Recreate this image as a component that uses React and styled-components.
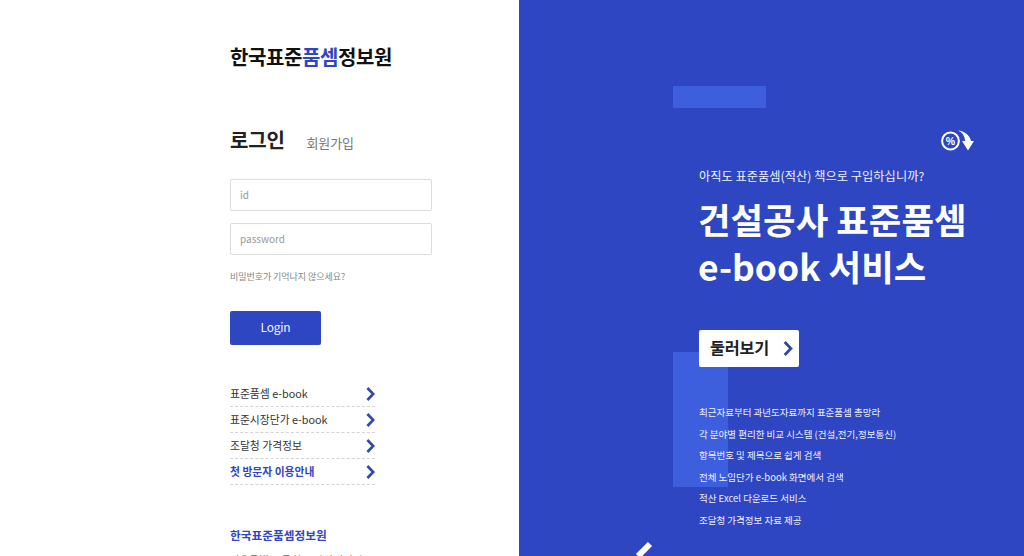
import React from 'react';
import styled, { createGlobalStyle } from 'styled-components';

const FONT = `"Noto Sans CJK KR", "Noto Sans", sans-serif`;
const BLUE = '#2e46c1';

const Global = createGlobalStyle`
  html, body { margin: 0; padding: 0; height: 100%; background: #fff; overflow: hidden; }
  * { box-sizing: border-box; }
  body { font-family: ${FONT}; }
`;

const Page = styled.div`
  display: flex;
  width: 1024px;
  height: 556px;
  overflow: hidden;
`;

const LeftPane = styled.section`
  width: 519px;
  flex: none;
  height: 556px;
  overflow: hidden;
  padding: 43px 0 0 230px;
  background: #fff;
`;

const Logo = styled.h1`
  margin: 0;
  height: 28px;
  font-size: 20px;
  line-height: 28px;
  font-weight: 700;
  letter-spacing: -0.4px;
  color: #111;
  white-space: nowrap;
`;

const LogoAccent = styled.span`
  color: ${BLUE};
`;

const Tabs = styled.div`
  display: flex;
  align-items: baseline;
  gap: 22px;
  margin-top: 54px;
  height: 30px;
`;

const ActiveTab = styled.span`
  font-size: 20px;
  line-height: 30px;
  font-weight: 700;
  letter-spacing: -0.2px;
  color: #222;
`;

const Tab = styled.span`
  font-size: 13px;
  line-height: 30px;
  letter-spacing: -0.2px;
  color: #777;
`;

const Field = styled.input`
  display: block;
  width: 202px;
  height: 32px;
  padding: 0 9px 2px;
  margin: 0 0 12px;
  border: 1px solid #dcdcdc;
  border-radius: 2px;
  background: #fff;
  font-family: ${FONT};
  font-size: 10px;
  outline: none;
  &::placeholder { color: #999; opacity: 1; }
`;

const Form = styled.form`
  margin-top: 24px;
`;

const Hint = styled.p`
  margin: 15px 0 0;
  font-size: 9px;
  line-height: 14px;
  letter-spacing: -0.05px;
  color: #868686;
`;

const LoginButton = styled.button`
  display: block;
  width: 91px;
  height: 34px;
  margin-top: 27px;
  padding: 0 0 3px;
  border: 0;
  border-radius: 2px;
  background: ${BLUE};
  color: #f2f4ff;
  font-family: ${FONT};
  font-size: 12px;
  letter-spacing: -0.25px;
  cursor: pointer;
`;

const LinkList = styled.ul`
  list-style: none;
  margin: 36px 0 0;
  padding: 0;
  width: 145px;
`;

const LinkRow = styled.li`
  display: flex;
  align-items: center;
  justify-content: space-between;
  height: 26px;
  border-bottom: 1px dashed #d4d4d4;
  font-size: 10.8px;
  font-weight: ${p => (p.$accent ? 700 : 400)};
  color: ${p => (p.$accent ? BLUE : '#333')};
  white-space: nowrap;
`;

const LinkLabel = styled.span`
  position: relative;
  top: -1px;
`;

const Chevron = styled.svg`
  flex: none;
  width: ${p => p.$w}px;
  height: ${p => p.$h}px;
  fill: none;
  stroke: ${p => p.$color || '#2f4aa8'};
  stroke-width: 2.6;
`;

const FooterTitle = styled.h2`
  margin: 41px 0 0;
  font-size: 11.7px;
  line-height: 18px;
  font-weight: 700;
  color: ${BLUE};
  white-space: nowrap;
`;

const FooterText = styled.p`
  margin: 8.5px 0 0;
  font-size: 10px;
  line-height: 14px;
  color: #666;
  letter-spacing: 0.6px;
  white-space: nowrap;
`;

const RightPane = styled.section`
  position: relative;
  flex: 1;
  height: 556px;
  overflow: hidden;
  padding: 167px 0 0 180px;
  background: ${BLUE};
  color: #fff;
`;

const TopBlock = styled.div`
  position: absolute;
  left: 154px;
  top: 86px;
  width: 93px;
  height: 22px;
  background: #3d5fdd;
`;

const SideBlock = styled.div`
  position: absolute;
  left: 154px;
  top: 352px;
  width: 55px;
  height: 135px;
  background: #3d5fdd;
`;

const Corner = styled.svg`
  position: absolute;
  left: 115px;
  top: 540px;
  width: 22px;
  height: 16px;
`;

const Badge = styled.svg`
  position: absolute;
  left: 422px;
  top: 130px;
  width: 34px;
  height: 22px;
`;

const Content = styled.div`
  position: relative;
`;

const Lead = styled.p`
  margin: 0;
  font-size: 12.2px;
  line-height: 18px;
  letter-spacing: 0.05px;
  color: #f1f3ff;
  white-space: nowrap;
`;

const Headline = styled.h2`
  margin: 11px 0 0 -1px;
  font-size: 35.4px;
  line-height: 46.5px;
  font-weight: 700;
  letter-spacing: 0;
  white-space: nowrap;
`;

const TourButton = styled.a`
  display: flex;
  align-items: center;
  justify-content: space-between;
  width: 100px;
  height: 37px;
  margin-top: 41px;
  padding: 0 6px 0 11px;
  border-radius: 2px;
  background: #fff;
  color: #222;
  font-size: 16.3px;
  font-weight: 700;
  letter-spacing: -0.2px;
`;

const TourLabel = styled.span`
  position: relative;
  top: -2px;
`;

const Features = styled.ul`
  list-style: none;
  margin: 35px 0 0;
  padding: 0;
`;

const Feature = styled.li`
  height: 21.6px;
  font-size: 9.5px;
  line-height: 21.6px;
  color: #eef0ff;
  white-space: nowrap;
`;

const links = [
  ['표준품셈 e-book'],
  ['표준시장단가 e-book'],
  ['조달청 가격정보'],
  ['첫 방문자 이용안내', true],
];

const features = [
  '최근자료부터 과년도자료까지 표준품셈 총망라',
  '각 분야별 편리한 비교 시스템 (건설,전기,정보통신)',
  '항목번호 및 제목으로 쉽게 검색',
  '전체 노임단가 e-book 화면에서 검색',
  '적산 Excel 다운로드 서비스',
  '조달청 가격정보 자료 제공',
];

const ChevronIcon = ({ w = 9, h = 14, color }) => (
  <Chevron $w={w} $h={h} $color={color} viewBox="0 0 9 14">
    <path d="M1.4 1 L7.2 7 L1.4 13" />
  </Chevron>
);

export default function App() {
  return (
    <Page>
      <Global />
      <LeftPane>
        <Logo>한국표준<LogoAccent>품셈</LogoAccent>정보원</Logo>
        <Tabs>
          <ActiveTab>로그인</ActiveTab>
          <Tab>회원가입</Tab>
        </Tabs>
        <Form onSubmit={e => e.preventDefault()}>
          <Field placeholder="id" />
          <Field placeholder="password" type="password" />
          <Hint>비밀번호가 기억나지 않으세요?</Hint>
          <LoginButton>Login</LoginButton>
        </Form>
        <LinkList>
          {links.map(([label, accent]) => (
            <LinkRow key={label} $accent={accent}>
              <LinkLabel>{label}</LinkLabel>
              <ChevronIcon />
            </LinkRow>
          ))}
        </LinkList>
        <FooterTitle>한국표준품셈정보원</FooterTitle>
        <FooterText>서울특별시 금천구 가산디지털로</FooterText>
      </LeftPane>
      <RightPane>
        <TopBlock />
        <SideBlock />
        <Corner viewBox="0 0 22 16">
          <path d="M4 16 L16 4" stroke="#fff" strokeWidth="6" />
        </Corner>
        <Badge viewBox="0 0 34 22">
          <circle cx="9.5" cy="11" r="8.4" fill="none" stroke="#fff" strokeWidth="2" />
          <text x="9.5" y="14.6" textAnchor="middle" fontSize="10.5" fontWeight="700" fill="#fff" fontFamily="Liberation Sans, sans-serif">%</text>
          <path d="M17 0.5 C23 1 29 5 30 11 L33 11 L27 20.5 L21 11 L24 11 C24 6 21 2 17 0.5 Z" fill="#fff" />
        </Badge>
        <Content>
          <Lead>아직도 표준품셈(적산) 책으로 구입하십니까?</Lead>
          <Headline>건설공사 표준품셈<br />e-book 서비스</Headline>
          <TourButton>
            <TourLabel>둘러보기</TourLabel>
            <ChevronIcon w={10} h={15} color="#3348a8" />
          </TourButton>
          <Features>
            {features.map(f => <Feature key={f}>{f}</Feature>)}
          </Features>
        </Content>
      </RightPane>
    </Page>
  );
}
